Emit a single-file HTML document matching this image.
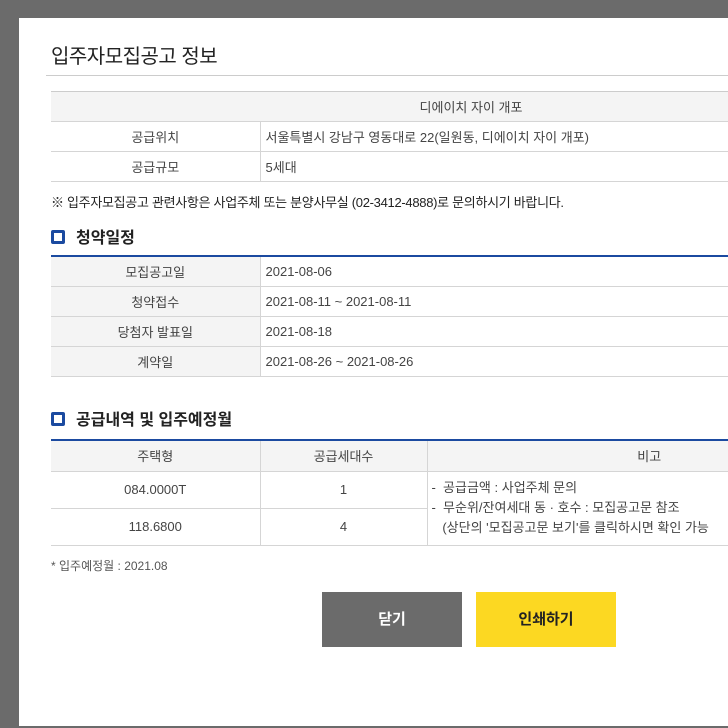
<!DOCTYPE html>
<html><head><meta charset="utf-8"><style>
*{margin:0;padding:0;box-sizing:border-box}
body{width:728px;height:728px;overflow:hidden;background:#6b6b6b;font-family:"Liberation Sans","Noto Sans CJK KR",sans-serif;color:#333;position:relative}
.panel{position:absolute;left:19px;top:18px;width:720px;height:708px;background:#fff}
.abs{position:absolute}
h1{position:absolute;left:51px;top:40px;font-size:20px;font-weight:normal;color:#222;letter-spacing:-0.5px}
.tline{position:absolute;left:46px;top:75px;width:700px;height:1px;background:#ccc}
table{position:absolute;left:51px;border-collapse:collapse;font-size:13px;color:#444}
td{border-bottom:1px solid #d5d5d5;height:30px;padding:0 0 0 5px}
td.l{text-align:center;border-right:1px solid #d5d5d5;padding:0}
.g{background:#f4f4f4}
.note{position:absolute;left:51px;top:192px;font-size:13px;color:#222;letter-spacing:-0.3px}
.sec{position:absolute;left:51px;font-size:16px;font-weight:bold;color:#222}
.sec i{display:inline-block;width:14px;height:14px;border:3px solid #1b4aa0;border-radius:2px;vertical-align:-1px;margin-right:11px}
.btn{position:absolute;top:592px;height:55px;width:140px;font-size:15px;font-weight:bold;text-align:center;line-height:55px}
</style></head><body>
<div class="panel"></div>
<h1>입주자모집공고 정보</h1>
<div class="tline"></div>
<table style="top:91px;width:690px;border-top:1px solid #ccc">
<tr><td class="g" colspan="2" style="text-align:center;padding-left:150px">디에이치 자이 개포</td></tr>
<tr><td class="l" style="width:209px">공급위치</td><td>서울특별시 강남구 영동대로 22(일원동, 디에이치 자이 개포)</td></tr>
<tr><td class="l">공급규모</td><td>5세대</td></tr>
</table>
<div class="note">※ 입주자모집공고 관련사항은 사업주체 또는 분양사무실 (02-3412-4888)로 문의하시기 바랍니다.</div>
<div class="sec" style="top:224px"><i></i>청약일정</div>
<table style="top:255px;width:690px;border-top:2px solid #1b4aa0">
<tr><td class="l g" style="width:209px">모집공고일</td><td>2021-08-06</td></tr>
<tr><td class="l g">청약접수</td><td>2021-08-11 ~ 2021-08-11</td></tr>
<tr><td class="l g">당첨자 발표일</td><td>2021-08-18</td></tr>
<tr><td class="l g">계약일</td><td>2021-08-26 ~ 2021-08-26</td></tr>
</table>
<div class="sec" style="top:406px"><i></i>공급내역 및 입주예정월</div>
<table style="top:439px;width:690px;border-top:2px solid #1b4aa0">
<tr class="g"><td class="l" style="width:209px;height:31px">주택형</td><td class="l" style="width:167px">공급세대수</td><td style="text-align:center;padding-left:130px">비고</td></tr>
<tr><td class="l" style="height:37px">084.0000T</td><td class="l">1</td><td rowspan="2" style="padding-left:4px;line-height:20px;white-space:nowrap;vertical-align:middle">-&nbsp; 공급금액 : 사업주체 문의<br>-&nbsp; 무순위/잔여세대 동 · 호수 : 모집공고문 참조<br>&nbsp;&nbsp;&nbsp;(상단의 '모집공고문 보기'를 클릭하시면 확인 가능</td></tr>
<tr><td class="l" style="height:37px">118.6800</td><td class="l">4</td></tr>
</table>
<div class="abs" style="left:51px;top:557px;font-size:12px;color:#555">* 입주예정월 : 2021.08</div>
<div class="btn" style="left:322px;background:#6b6b6b;color:#fff">닫기</div>
<div class="btn" style="left:476px;background:#fcd822;color:#222">인쇄하기</div>
</body></html>
